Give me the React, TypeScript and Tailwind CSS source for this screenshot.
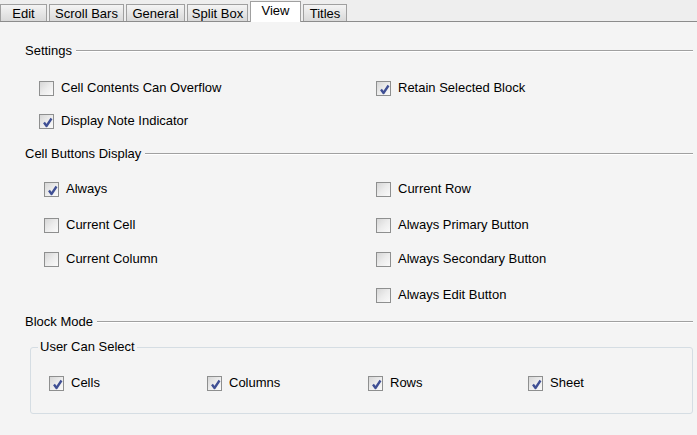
import React from "react";

type Tab = { label: string; width: string; active?: boolean };

const tabs: Tab[] = [
  { label: "Edit", width: "w-[47px]" },
  { label: "Scroll Bars", width: "w-[75px]" },
  { label: "General", width: "w-[59px]" },
  { label: "Split Box", width: "w-[61px]" },
  { label: "View", width: "w-[51px]", active: true },
  { label: "Titles", width: "w-[44px]" },
];

function Check({ checked, label }: { checked?: boolean; label: string }) {
  return (
    <div className="flex h-[20px] items-center gap-[7px]">
      <div className="h-[15px] w-[15px] shrink-0 border border-[#8e8f8f] bg-gradient-to-br from-[#d6d6d6] via-[#ececec] to-[#fafafa] p-px">
        {checked && (
          <svg width="13" height="13" viewBox="0 0 13 13" fill="none">
            <path d="M3 6.5L5.5 10L10.5 2.5" stroke="#3f4f94" strokeWidth="2.3" strokeLinejoin="round" />
          </svg>
        )}
      </div>
      <span className="whitespace-nowrap">{label}</span>
    </div>
  );
}

function SectionHeader({ title }: { title: string }) {
  return (
    <div className="flex h-[20px] items-center">
      <span className="whitespace-nowrap">{title}</span>
      <div className="ml-[4px] flex-1 border-t border-b border-t-[#a0a0a0] border-b-white" />
    </div>
  );
}

export default function App() {
  return (
    <div
      className="flex h-[435px] w-[697px] flex-col bg-[#f4f4f4] text-[13px] leading-[16px] text-black"
      style={{ fontFamily: '"Liberation Sans", Arial, sans-serif' }}
    >
      {/* Tab strip */}
      <div className="flex h-[22px] shrink-0 items-end gap-[2px] border-b border-[#8c8c8c] bg-[#eeeeee]">
        {tabs.map((t) =>
          t.active ? (
            <div
              key={t.label}
              className={`${t.width} relative z-10 mb-[-1px] flex h-[21px] items-start justify-center border border-b-0 border-[#a0a0a0] bg-white pt-[1px]`}
            >
              {t.label}
            </div>
          ) : (
            <div
              key={t.label}
              className={`${t.width} flex h-[17px] items-center justify-center border border-b-0 border-[#a0a0a0] bg-gradient-to-b from-[#f4f4f4] to-[#d9d9d9] pt-px`}
            >
              {t.label}
            </div>
          )
        )}
      </div>

      <div className="flex flex-col pl-[25px] pr-[4px]">
        {/* Settings */}
        <div className="mt-[19px]">
          <SectionHeader title="Settings" />
        </div>
        <div className="mt-[17px] grid grid-cols-[337px_1fr] pl-[14px]">
          <Check label="Cell Contents Can Overflow" />
          <Check checked label="Retain Selected Block" />
        </div>
        <div className="mt-[13px] pl-[14px]">
          <Check checked label="Display Note Indicator" />
        </div>

        {/* Cell Buttons Display */}
        <div className="mt-[13px]">
          <SectionHeader title="Cell Buttons Display" />
        </div>
        <div className="mt-[15px] grid grid-cols-[332px_1fr] pl-[19px]">
          <Check checked label="Always" />
          <Check label="Current Row" />
        </div>
        <div className="mt-[16px] grid grid-cols-[332px_1fr] pl-[19px]">
          <Check label="Current Cell" />
          <Check label="Always Primary Button" />
        </div>
        <div className="mt-[14px] grid grid-cols-[332px_1fr] pl-[19px]">
          <Check label="Current Column" />
          <Check label="Always Secondary Button" />
        </div>
        <div className="mt-[16px] grid grid-cols-[332px_1fr] pl-[19px]">
          <div />
          <Check label="Always Edit Button" />
        </div>

        {/* Block Mode */}
        <div className="mt-[7px]">
          <SectionHeader title="Block Mode" />
        </div>
        <fieldset className="ml-[5px] mt-[7px] rounded-[3px] border border-[#d5dde3] px-[7px] pb-[20px]">
          <legend className="px-[2px] leading-[16px]">User Can Select</legend>
          <div className="mt-[18px] grid grid-cols-[158px_161px_160px_1fr] pl-[11px]">
            <Check checked label="Cells" />
            <Check checked label="Columns" />
            <Check checked label="Rows" />
            <Check checked label="Sheet" />
          </div>
        </fieldset>
      </div>
    </div>
  );
}
